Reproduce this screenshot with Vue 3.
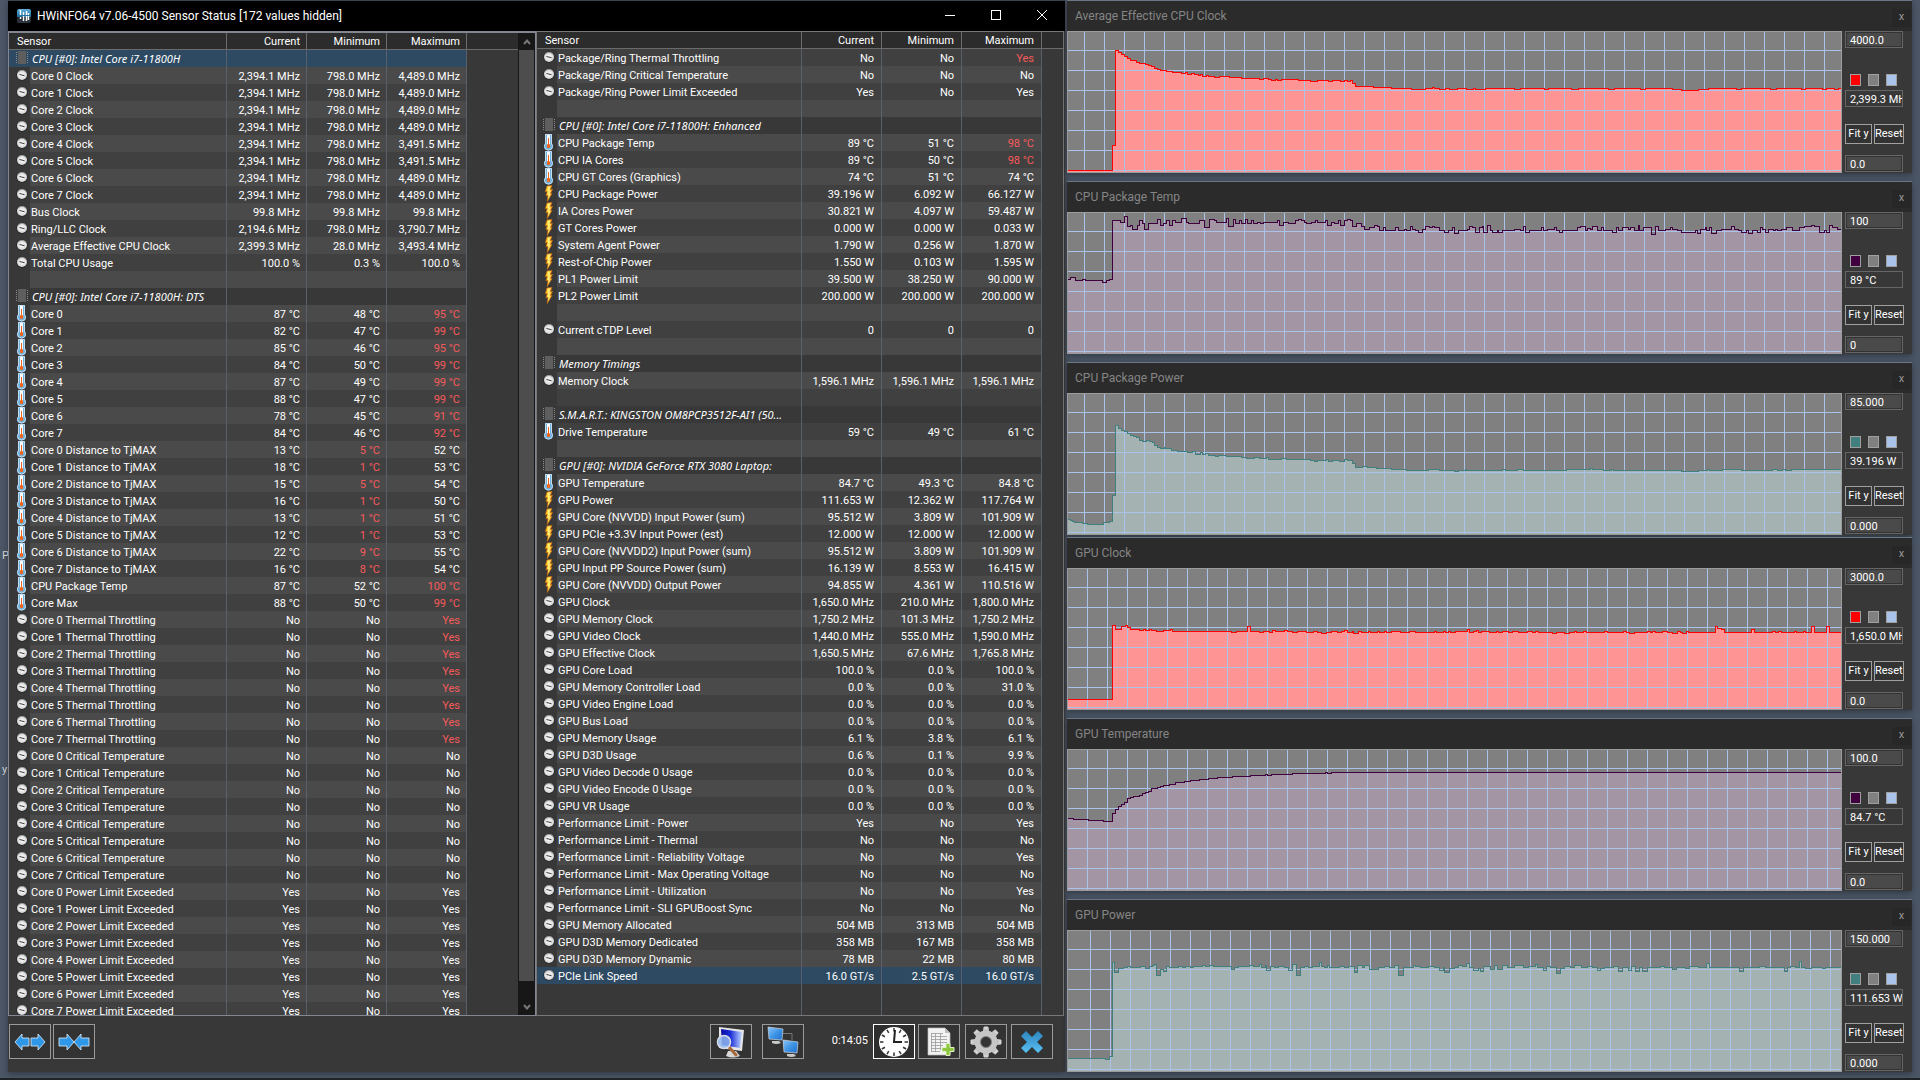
<script setup>
const CLOCK = 'clock'
const TEMP = 'temp'
const POWER = 'power'

const row = (icon, name, current, min, max, hot = '') => ({ kind: 'value', icon, name, cells: [current, min, max], hot })
const section = (name, selected = false) => ({ kind: 'section', icon: 'chip', name, cells: ['', '', ''], hot: '', selected })
const blank = () => ({ kind: 'blank', icon: '', name: '', cells: ['', '', ''], hot: '' })
const cores = [0, 1, 2, 3, 4, 5, 6, 7]

const coreMax = ['4,489.0', '4,489.0', '4,489.0', '4,489.0', '3,491.5', '3,491.5', '4,489.0', '4,489.0']
const coreTemps = [[87, 48, 95], [82, 47, 99], [85, 46, 95], [84, 50, 99], [87, 49, 99], [88, 47, 99], [78, 45, 91], [84, 46, 92]]
const coreDistance = [[13, 5, 52], [18, 1, 53], [15, 5, 54], [16, 1, 50], [13, 1, 51], [12, 1, 53], [22, 9, 55], [16, 8, 54]]

const leftRows = [
  section('CPU [#0]: Intel Core i7-11800H', true),
  ...cores.map(i => row(CLOCK, `Core ${i} Clock`, '2,394.1 MHz', '798.0 MHz', `${coreMax[i]} MHz`)),
  row(CLOCK, 'Bus Clock', '99.8 MHz', '99.8 MHz', '99.8 MHz'),
  row(CLOCK, 'Ring/LLC Clock', '2,194.6 MHz', '798.0 MHz', '3,790.7 MHz'),
  row(CLOCK, 'Average Effective CPU Clock', '2,399.3 MHz', '28.0 MHz', '3,493.4 MHz'),
  row(CLOCK, 'Total CPU Usage', '100.0 %', '0.3 %', '100.0 %'),
  blank(),
  section('CPU [#0]: Intel Core i7-11800H: DTS'),
  ...cores.map(i => row(TEMP, `Core ${i}`, ...coreTemps[i].map(v => `${v} °C`), 'max')),
  ...cores.map(i => row(TEMP, `Core ${i} Distance to TjMAX`, ...coreDistance[i].map(v => `${v} °C`), 'min')),
  row(TEMP, 'CPU Package Temp', '87 °C', '52 °C', '100 °C', 'max'),
  row(TEMP, 'Core Max', '88 °C', '50 °C', '99 °C', 'max'),
  ...cores.map(i => row(CLOCK, `Core ${i} Thermal Throttling`, 'No', 'No', 'Yes', 'max')),
  ...cores.map(i => row(CLOCK, `Core ${i} Critical Temperature`, 'No', 'No', 'No')),
  ...cores.map(i => row(CLOCK, `Core ${i} Power Limit Exceeded`, 'Yes', 'No', 'Yes'))
]

const rightRows = [
  row(CLOCK, 'Package/Ring Thermal Throttling', 'No', 'No', 'Yes', 'max'),
  row(CLOCK, 'Package/Ring Critical Temperature', 'No', 'No', 'No'),
  row(CLOCK, 'Package/Ring Power Limit Exceeded', 'Yes', 'No', 'Yes'),
  blank(),
  section('CPU [#0]: Intel Core i7-11800H: Enhanced'),
  row(TEMP, 'CPU Package Temp', '89 °C', '51 °C', '98 °C', 'max'),
  row(TEMP, 'CPU IA Cores', '89 °C', '50 °C', '98 °C', 'max'),
  row(TEMP, 'CPU GT Cores (Graphics)', '74 °C', '51 °C', '74 °C'),
  row(POWER, 'CPU Package Power', '39.196 W', '6.092 W', '66.127 W'),
  row(POWER, 'IA Cores Power', '30.821 W', '4.097 W', '59.487 W'),
  row(POWER, 'GT Cores Power', '0.000 W', '0.000 W', '0.033 W'),
  row(POWER, 'System Agent Power', '1.790 W', '0.256 W', '1.870 W'),
  row(POWER, 'Rest-of-Chip Power', '1.550 W', '0.103 W', '1.595 W'),
  row(POWER, 'PL1 Power Limit', '39.500 W', '38.250 W', '90.000 W'),
  row(POWER, 'PL2 Power Limit', '200.000 W', '200.000 W', '200.000 W'),
  blank(),
  row(CLOCK, 'Current cTDP Level', '0', '0', '0'),
  blank(),
  section('Memory Timings'),
  row(CLOCK, 'Memory Clock', '1,596.1 MHz', '1,596.1 MHz', '1,596.1 MHz'),
  blank(),
  section('S.M.A.R.T.: KINGSTON OM8PCP3512F-AI1 (50...'),
  row(TEMP, 'Drive Temperature', '59 °C', '49 °C', '61 °C'),
  blank(),
  section('GPU [#0]: NVIDIA GeForce RTX 3080 Laptop:'),
  row(TEMP, 'GPU Temperature', '84.7 °C', '49.3 °C', '84.8 °C'),
  row(POWER, 'GPU Power', '111.653 W', '12.362 W', '117.764 W'),
  row(POWER, 'GPU Core (NVVDD) Input Power (sum)', '95.512 W', '3.809 W', '101.909 W'),
  row(POWER, 'GPU PCIe +3.3V Input Power (est)', '12.000 W', '12.000 W', '12.000 W'),
  row(POWER, 'GPU Core (NVVDD2) Input Power (sum)', '95.512 W', '3.809 W', '101.909 W'),
  row(POWER, 'GPU Input PP Source Power (sum)', '16.139 W', '8.553 W', '16.415 W'),
  row(POWER, 'GPU Core (NVVDD) Output Power', '94.855 W', '4.361 W', '110.516 W'),
  row(CLOCK, 'GPU Clock', '1,650.0 MHz', '210.0 MHz', '1,800.0 MHz'),
  row(CLOCK, 'GPU Memory Clock', '1,750.2 MHz', '101.3 MHz', '1,750.2 MHz'),
  row(CLOCK, 'GPU Video Clock', '1,440.0 MHz', '555.0 MHz', '1,590.0 MHz'),
  row(CLOCK, 'GPU Effective Clock', '1,650.5 MHz', '67.6 MHz', '1,765.8 MHz'),
  row(CLOCK, 'GPU Core Load', '100.0 %', '0.0 %', '100.0 %'),
  row(CLOCK, 'GPU Memory Controller Load', '0.0 %', '0.0 %', '31.0 %'),
  row(CLOCK, 'GPU Video Engine Load', '0.0 %', '0.0 %', '0.0 %'),
  row(CLOCK, 'GPU Bus Load', '0.0 %', '0.0 %', '0.0 %'),
  row(CLOCK, 'GPU Memory Usage', '6.1 %', '3.8 %', '6.1 %'),
  row(CLOCK, 'GPU D3D Usage', '0.6 %', '0.1 %', '9.9 %'),
  row(CLOCK, 'GPU Video Decode 0 Usage', '0.0 %', '0.0 %', '0.0 %'),
  row(CLOCK, 'GPU Video Encode 0 Usage', '0.0 %', '0.0 %', '0.0 %'),
  row(CLOCK, 'GPU VR Usage', '0.0 %', '0.0 %', '0.0 %'),
  row(CLOCK, 'Performance Limit - Power', 'Yes', 'No', 'Yes'),
  row(CLOCK, 'Performance Limit - Thermal', 'No', 'No', 'No'),
  row(CLOCK, 'Performance Limit - Reliability Voltage', 'No', 'No', 'Yes'),
  row(CLOCK, 'Performance Limit - Max Operating Voltage', 'No', 'No', 'No'),
  row(CLOCK, 'Performance Limit - Utilization', 'No', 'No', 'Yes'),
  row(CLOCK, 'Performance Limit - SLI GPUBoost Sync', 'No', 'No', 'No'),
  row(CLOCK, 'GPU Memory Allocated', '504 MB', '313 MB', '504 MB'),
  row(CLOCK, 'GPU D3D Memory Dedicated', '358 MB', '167 MB', '358 MB'),
  row(CLOCK, 'GPU D3D Memory Dynamic', '78 MB', '22 MB', '80 MB'),
  { ...row(CLOCK, 'PCIe Link Speed', '16.0 GT/s', '2.5 GT/s', '16.0 GT/s'), selected: true }
]

const panes = [
  { id: 'left', rows: leftRows, scroll: true },
  { id: 'right', rows: rightRows, scroll: false }
]

const PLOT_W = 773
const PLOT_H = 140

// Each series is a list of "x:y" steps; the level holds until the next x.
const graphs = [
  {
    title: 'Average Effective CPU Clock', max: '4000.0', value: '2,399.3 MHz', min: '0.0', tone: 'red', grid: 16,
    steps: '0:138 44:113 47:18 50:20 53:22 56:24 59:26 62:28 68:30 71:31 77:32 80:33 83:34 86:36 89:37 92:38 98:39 104:40 113:41 117:40 119:42 123:41 126:42 130:43 132:42 134:44 138:43 140:44 146:45 151:44 161:45 173:46 191:47 195:46 200:47 203:48 207:47 209:48 213:47 230:48 242:49 249:48 260:49 264:48 272:49 276:48 279:49 282:48 284:51 287:54 305:55 323:56 343:57 357:56 364:55 366:56 371:57 377:56 381:57 389:56 398:57 405:56 407:57 417:56 446:57 452:56 476:57 480:56 503:57 510:56 540:57 546:56 572:57 577:56 604:57 613:58 630:57 640:56 668:57 673:56 702:57 708:56 733:57 737:56 754:57 758:56 766:57 770:56'
  },
  {
    title: 'CPU Package Temp', max: '100', value: '89 °C', min: '0', tone: 'plum', grid: 16,
    steps: '0:66 2:64 7:67 14:66 17:67 34:69 38:67 41:66 44:7 52:9 56:3 59:13 62:12 64:16 69:12 71:7 74:10 76:16 80:10 89:6 92:12 95:10 98:7 101:12 104:7 107:9 113:5 118:9 120:10 131:7 136:14 141:6 146:7 148:9 158:5 160:13 165:6 167:10 171:7 173:10 177:6 179:10 183:7 185:10 189:9 192:10 195:9 209:7 211:12 215:9 220:10 227:7 230:6 233:7 236:9 238:10 243:9 247:7 249:9 257:7 259:12 263:9 266:10 270:7 272:12 276:7 279:6 282:7 284:13 288:10 293:13 296:16 301:14 306:12 309:13 311:17 315:14 317:17 327:14 330:17 336:16 338:17 342:13 344:16 347:17 350:19 354:16 357:13 361:14 364:13 366:14 371:17 376:19 380:17 384:14 386:20 390:17 399:16 401:13 404:14 407:19 411:14 414:13 415:19 419:12 422:17 424:19 429:17 430:19 434:17 446:16 452:17 455:13 457:19 461:17 473:14 475:17 479:16 486:14 488:17 491:19 494:17 509:14 512:13 517:17 519:15 522:16 524:13 529:17 533:14 535:17 544:19 548:14 550:17 554:14 560:16 562:14 566:17 570:12 571:17 575:14 583:21 587:13 590:17 597:16 602:14 604:16 609:17 613:19 627:17 629:20 632:16 637:14 638:17 641:14 643:20 648:17 653:16 663:13 666:16 670:17 673:19 678:17 680:20 684:17 689:19 692:14 694:16 697:19 700:16 705:17 707:16 709:17 713:16 718:14 724:17 731:14 736:13 743:12 746:13 751:19 756:17 758:19 761:12 764:14 769:16'
  },
  {
    title: 'CPU Package Power', max: '85.000', value: '39.196 W', min: '0.000', tone: 'teal', grid: 16,
    steps: '0:125 2:126 4:127 6:128 14:129 19:130 35:128 41:127 44:101 47:31 50:34 53:36 56:37 59:39 62:41 65:42 68:43 71:46 74:47 78:46 81:47 84:48 86:51 89:53 92:54 96:53 97:54 103:56 109:57 119:58 124:57 127:60 132:58 134:60 137:59 140:61 147:62 150:61 158:62 173:63 178:64 186:63 191:64 198:63 200:65 213:64 218:65 242:66 246:67 249:66 258:65 260:67 264:66 271:67 276:65 279:66 284:69 287:73 294:72 299:73 308:74 323:75 338:76 360:75 371:76 386:77 390:76 397:75 398:76 434:75 437:76 449:75 455:76 498:75 522:74 524:75 535:76 543:75 545:76 613:77 630:76 639:75 641:76 654:75 673:76 704:75 709:76 714:75 717:76 723:75'
  },
  {
    title: 'GPU Clock', max: '3000.0', value: '1,650.0 MHz', min: '0.0', tone: 'red', grid: 19, tight: true,
    steps: '0:130 44:56 47:60 53:57 57:56 59:58 62:60 71:61 75:60 77:61 81:60 83:61 88:62 95:61 102:60 104:62 163:63 168:62 179:57 182:62 191:63 195:62 201:63 204:61 207:62 216:61 219:62 224:63 229:62 238:63 245:62 249:63 253:64 258:63 263:62 269:63 273:62 276:61 279:63 284:62 285:64 290:62 293:63 300:62 302:63 309:62 311:63 316:62 318:63 323:62 332:63 341:62 347:63 366:62 368:63 375:62 377:63 380:62 382:63 387:62 399:60 401:63 405:62 408:61 410:63 413:62 421:63 428:62 430:63 434:62 440:63 444:62 450:63 459:62 464:63 467:62 470:63 484:64 488:63 496:64 501:63 506:62 508:63 515:62 518:63 536:62 539:63 555:62 558:63 561:64 566:63 579:62 582:63 584:62 587:63 594:62 599:63 604:64 609:62 612:63 614:64 618:62 620:63 647:57 649:59 653:60 656:63 683:60 686:63 704:62 707:63 710:62 713:63 726:62 728:63 735:62 737:63 743:57 746:63 758:57 761:63'
  },
  {
    title: 'GPU Temperature', max: '100.0', value: '84.7 °C', min: '0.0', tone: 'plum', grid: 19,
    steps: '0:68 5:69 20:70 35:71 44:63 47:59 50:56 53:54 56:52 59:48 62:47 65:46 71:45 74:43 77:42 80:41 83:38 89:37 92:36 95:35 101:34 107:32 116:31 122:30 131:29 140:28 149:27 164:26 182:25 197:24 199:25 203:24 224:23 257:22 259:23 263:22'
  },
  {
    title: 'GPU Power', max: '150.000', value: '111.653 W', min: '0.000', tone: 'teal', grid: 22,
    steps: '0:127 37:128 41:125 44:31 46:41 50:37 55:36 59:35 62:36 72:35 77:37 81:35 84:34 86:33 88:44 92:38 95:40 98:35 101:36 110:35 114:36 117:35 122:36 125:35 134:34 137:35 141:34 145:35 163:38 166:36 170:35 181:34 185:35 191:33 193:36 197:34 198:39 202:35 206:36 210:35 216:36 220:39 224:33 228:44 232:36 236:35 240:36 244:35 251:31 253:35 256:36 259:34 261:36 271:35 276:36 280:35 286:41 289:34 294:36 296:34 301:38 307:38 310:36 316:35 321:36 326:34 330:44 335:36 345:34 347:35 352:36 360:35 366:36 371:39 375:36 376:41 381:37 386:36 390:34 394:35 398:32 401:36 405:39 410:37 412:40 415:35 422:38 426:34 429:38 434:34 439:36 446:34 455:36 460:35 467:33 469:36 475:39 478:35 482:36 488:42 492:37 496:35 502:36 506:34 513:36 519:35 524:36 529:39 532:37 536:36 545:35 550:40 554:36 560:39 563:35 567:40 571:36 574:40 579:36 592:35 596:36 604:38 608:36 617:37 621:35 630:36 638:32 641:36 671:40 675:36 691:35 697:36 716:40 719:36 722:35 727:36 731:30 733:36 737:37 743:36 754:37 757:36'
  }
].map(g => {
  const pts = g.steps.split(' ').map(p => p.split(':').map(Number))
  const line = pts.map(([x, y], i) => (i ? `H${x + 0.5}V${y + 0.5}` : `M0 ${y + 0.5}`)).join('') + `H${PLOT_W}`
  const columns = []
  for (let x = g.grid; x < PLOT_W; x += 20) columns.push(x)
  return { ...g, line, area: `${line}V${PLOT_H}H0Z`, columns }
})

const gridRows = [18, 38, 58, 78, 98, 118, 138]
const ticks = Array.from({ length: 12 }, (_, i) => i * 30)
const teeth = Array.from({ length: 8 }, (_, i) => i * 45)
</script>

<template>
  <div class="desktop">
    <svg class="defs" width="0" height="0" aria-hidden="true">
      <defs>
        <radialGradient id="dial"><stop offset="0" stop-color="#fff" /><stop offset="1" stop-color="#d4d4d4" /></radialGradient>
        <linearGradient id="bolt" x2="1"><stop offset="0" stop-color="#ffb400" /><stop offset=".5" stop-color="#fff27a" /><stop offset="1" stop-color="#ff9a1a" /></linearGradient>
        <linearGradient id="screen" x2="1" y2="1"><stop offset="0" stop-color="#8fc6f7" /><stop offset=".5" stop-color="#3f95e6" /><stop offset="1" stop-color="#1d6fd0" /></linearGradient>
        <linearGradient id="navy" x2="1" y2="0"><stop offset="0" stop-color="#0a0a9c" /><stop offset=".45" stop-color="#1a2ed8" /><stop offset="1" stop-color="#c2d8ff" /></linearGradient>
        <linearGradient id="metal" x2="0" y2="1"><stop offset="0" stop-color="#e4e4e4" /><stop offset="1" stop-color="#aaa" /></linearGradient>
        <linearGradient id="cross" x2="0" y2="1"><stop offset="0" stop-color="#2a86bf" /><stop offset="1" stop-color="#5cc0f2" /></linearGradient>
        <linearGradient id="badge" x2="0" y2="1"><stop offset="0" stop-color="#5fb0dc" /><stop offset=".55" stop-color="#1c6a99" /><stop offset=".56" stop-color="#1a2228" /><stop offset="1" stop-color="#303a40" /></linearGradient>
      </defs>
      <symbol id="icon-clock" viewBox="0 0 12 17">
        <circle cx="6" cy="8" r="5.600" fill="#202020" />
        <circle cx="6" cy="8" r="5" fill="url(#dial)" />
        <path d="M2 5.600A4.600 4.600 0 0 1 10 5.600" fill="none" stroke="#8a8a8a" stroke-width=".9" />
        <path d="M3.500 7.500L8.500 8.700" stroke="#3a3a3a" stroke-width="1" fill="none" />
      </symbol>
      <symbol id="icon-temp" viewBox="0 0 12 17">
        <path d="M2 0h7v9.500a4 4 0 0 1 1 3a4.500 4 0 0 1-9 0a4 4 0 0 1 1-3Z" fill="#6fb0dc" />
        <path d="M2.500 .5h6v9.500q1 1 1 2.500a4 3.500 0 0 1-8 0q0-1.500 1-2.500Z" fill="none" stroke="#c4ddee" />
        <rect x="4" y="1" width="3" height="11" fill="#fff" />
        <rect x="5" y="4" width="1" height="8" fill="#f0641e" />
        <rect x="4" y="10" width="3" height="4" rx="1" fill="#f2651a" />
      </symbol>
      <symbol id="icon-power" viewBox="0 0 12 17">
        <path d="M4 1L9 .5L7.300 4.500L9.500 4.300L7.500 8.500L9 8.600L4.200 16.500L5 10.500L3 10.700L4.300 6.600L2.300 6.800Z" fill="url(#bolt)" stroke="#c8680a" stroke-width=".7" />
      </symbol>
      <symbol id="icon-chip" viewBox="0 0 12 17">
        <rect x="2" y="1" width="8" height="13" fill="#5e5e5e" />
        <path d="M.5 2v12M11.500 2v12" stroke="#8c8c8c" stroke-width="1" stroke-dasharray="1 1" />
      </symbol>
    </svg>

    <div class="behind" aria-hidden="true"><span class="stray first">P</span><span class="stray second">y</span></div>

    <main class="window sensors">
      <header class="titlebar">
        <svg class="app-icon" viewBox="0 0 14 14" aria-hidden="true">
          <rect width="14" height="14" rx="2" fill="url(#badge)" />
          <path d="M3.500 1v5M6.500 3v3M9.500 2v4M11.500 4v2M3.500 8v2M6.500 7v5M9.500 7v5M11.500 7v4" stroke="#fff" stroke-width="1.500" />
        </svg>
        <h1>HWiNFO64 v7.06-4500 Sensor Status [172 values hidden]</h1>
        <div class="win-buttons">
          <button type="button" aria-label="Minimize"><svg viewBox="0 0 10 10"><path d="M0 5.500h10" /></svg></button>
          <button type="button" aria-label="Maximize"><svg viewBox="0 0 10 10"><rect x=".5" y=".5" width="9" height="9" /></svg></button>
          <button type="button" aria-label="Close"><svg viewBox="0 0 10 10"><path d="M0 0L10 10M10 0L0 10" /></svg></button>
        </div>
      </header>

      <div class="panes">
        <section v-for="pane in panes" :key="pane.id" class="pane" :class="pane.id">
          <table>
            <colgroup>
              <col class="c-icon"><col><col class="c-num"><col class="c-num"><col class="c-num"><col class="c-rest">
            </colgroup>
            <thead>
              <tr>
                <th colspan="2" scope="col" class="name">Sensor</th>
                <th scope="col">Current</th>
                <th scope="col">Minimum</th>
                <th scope="col">Maximum</th>
                <td class="rest"></td>
              </tr>
            </thead>
            <tbody>
              <tr v-for="(r, i) in pane.rows" :key="i" :class="[r.kind, { selected: r.selected }]">
                <td class="icon"><svg v-if="r.icon" viewBox="0 0 12 17" aria-hidden="true"><use :href="`#icon-${r.icon}`" /></svg></td>
                <td class="name">{{ r.name }}</td>
                <td>{{ r.cells[0] }}</td>
                <td :class="{ hot: r.hot === 'min' }">{{ r.cells[1] }}</td>
                <td :class="{ hot: r.hot === 'max' }">{{ r.cells[2] }}</td>
                <td class="rest"></td>
              </tr>
              <tr v-if="!pane.scroll" class="filler"><td class="icon"></td><td></td><td></td><td></td><td></td><td class="rest"></td></tr>
            </tbody>
          </table>
          <div v-if="pane.scroll" class="scrollbar">
            <button type="button" aria-label="Scroll up"><svg viewBox="0 0 8 6"><path d="M1 5L4 1.500L7 5" /></svg></button>
            <div class="track"><div class="thumb"></div></div>
            <button type="button" aria-label="Scroll down"><svg viewBox="0 0 8 6"><path d="M1 1L4 4.500L7 1" /></svg></button>
          </div>
        </section>
      </div>

      <footer class="toolbar">
        <div class="group">
          <button type="button" aria-label="Expand columns">
            <svg viewBox="0 0 32 18" width="32" height="18"><path d="M1 9L8 1v4h7v8H8v4ZM31 9L24 1v4h-7v8h7v4Z" fill="#2f97e8" stroke="#e2f0fa" stroke-width=".8" /></svg>
          </button>
          <button type="button" aria-label="Shrink columns">
            <svg viewBox="0 0 32 18" width="32" height="18"><path d="M16 9L9 1v4H1v8h8v4ZM16 9L23 1v4h8v8h-8v4Z" fill="#2f97e8" stroke="#e2f0fa" stroke-width=".8" /></svg>
          </button>
        </div>
        <div class="group actions">
          <button type="button" class="summary" aria-label="System summary">
            <svg viewBox="0 0 32 32" width="32" height="32">
              <path d="M13 25h8l4 5q-7 3-14 0Z" fill="#d8d8d8" />
              <path d="M4 1L29 4L27 25L4 22Z" fill="#e6e6e6" />
              <path d="M6 3L27 6L25 22L7 19Z" fill="url(#navy)" />
              <path d="M14 21L21 29" stroke="#a86a3a" stroke-width="3" stroke-linecap="round" />
              <circle cx="9" cy="16" r="6.500" fill="#8fb6ee" fill-opacity=".85" stroke="#d6dde6" stroke-width="1.600" />
            </svg>
          </button>
          <button type="button" class="remote" aria-label="Remote monitoring">
            <svg viewBox="0 0 32 32" width="32" height="32">
              <path d="M16 7.500h9V14" fill="none" stroke="#777" />
              <path d="M5 15h7l2 2q-5 2-9 0Z" fill="#c8c8c8" />
              <path d="M1 1L16 3L15 14L2 13Z" fill="url(#screen)" stroke="#cfd6dc" stroke-width=".7" />
              <path d="M20 28h7l2 2q-5 2-9 0Z" fill="#c8c8c8" />
              <path d="M16 14L31 16L30 27L17 26Z" fill="url(#screen)" stroke="#cfd6dc" stroke-width=".7" />
            </svg>
          </button>
          <time class="elapsed">0:14:05</time>
          <button type="button" class="reset lit" aria-label="Reset timer">
            <svg viewBox="0 0 32 32" width="32" height="32">
              <circle cx="16" cy="16" r="15" fill="#fff" />
              <path v-for="t in ticks" :key="t" d="M16 2v3.500" stroke="#333" stroke-width="1.500" :transform="`rotate(${t} 16 16)`" />
              <path d="M17 4L16 16H24" fill="none" stroke="#222" stroke-width="2" />
            </svg>
          </button>
          <button type="button" class="log" aria-label="Start logging">
            <svg viewBox="0 0 32 32" width="32" height="32">
              <path d="M5 2H22L27 7V29H5Z" fill="#f2f2f2" stroke="#bbb" stroke-width=".7" />
              <path d="M22 2L27 7H22Z" fill="#bdbdbd" />
              <path d="M8 7.500H20M8 10.500H24M8 13.500H24M8 16.500H24M8 19.500H20M8 22.500H18M8 25.500H17M8.500 7V26M12.500 7V26M17.500 7V24" stroke="#999" stroke-width=".8" fill="none" />
              <path d="M23 17.500h4v4h4v4h-4v4h-4v-4h-4v-4h4Z" fill="#8dc63f" stroke="#dff0c4" />
            </svg>
          </button>
          <button type="button" class="settings" aria-label="Settings">
            <svg viewBox="0 0 32 32" width="32" height="32">
              <path v-for="t in teeth" :key="t" d="M13.500 6L14 1h4l.5 5Z" fill="url(#metal)" stroke="#ccc" :transform="`rotate(${t} 16 16)`" />
              <circle cx="16" cy="16" r="8.500" fill="none" stroke="#c6c6c6" stroke-width="6" />
              <circle cx="16" cy="16" r="5.500" fill="#333" stroke="#888" />
            </svg>
          </button>
          <button type="button" class="close" aria-label="Close sensors">
            <svg viewBox="0 0 32 32" width="32" height="32"><path d="M10 5L16 11L22 5L27 10L21 16L27 22L22 27L16 21L10 27L5 22L11 16L5 10Z" fill="url(#cross)" /></svg>
          </button>
        </div>
      </footer>
    </main>

    <aside class="graphs">
      <section v-for="g in graphs" :key="g.title" class="window graph" :class="[g.tone, { tight: g.tight }]">
        <header class="graph-title">
          <h2>{{ g.title }}</h2>
          <button type="button" :aria-label="`Close ${g.title}`">x</button>
        </header>
        <div class="graph-body">
          <svg class="plot" :viewBox="`0 0 ${PLOT_W} ${PLOT_H}`" preserveAspectRatio="none" role="img" :aria-label="g.title" shape-rendering="crispEdges">
            <path class="area" :d="g.area" />
            <rect v-for="x in g.columns" :key="`x${x}`" class="grid" :x="x" y="0" width="1" :height="PLOT_H" />
            <rect v-for="y in gridRows" :key="`y${y}`" class="grid" x="0" :y="y" :width="PLOT_W" height="1" />
            <path class="line" :d="g.line" />
          </svg>
          <div class="side">
            <input type="text" class="limit" :value="g.max" :aria-label="`${g.title} upper limit`">
            <div class="swatches">
              <button type="button" class="swatch series" aria-label="Line colour"></button>
              <button type="button" class="swatch back" aria-label="Background colour"></button>
              <button type="button" class="swatch mesh" aria-label="Grid colour"></button>
            </div>
            <input type="text" class="value" :value="g.value" readonly :aria-label="`${g.title} current value`">
            <div class="fit">
              <button type="button">Fit y</button>
              <button type="button">Reset</button>
            </div>
            <input type="text" class="limit" :value="g.min" :aria-label="`${g.title} lower limit`">
          </div>
        </div>
      </section>
    </aside>
    <div class="taskbar" aria-hidden="true"></div>
  </div>
</template>

<style>
html, body { margin: 0; background: #4b5666; }
</style>

<style scoped>
* { box-sizing: border-box; }
.desktop {
  position: relative;
  height: 100vh;
  display: grid;
  grid-template-columns: minmax(0, 1057fr) minmax(0, 845fr);
  grid-template-rows: minmax(0, 1fr) 2px;
  column-gap: 2px;
  padding: 0 8px;
  background: #4b5666;
  color: #fff;
  font: 11px/17px Roboto, "Noto Sans", sans-serif;
  overflow: hidden;
}
button, input { font: inherit; color: inherit; margin: 0; }
h1, h2 { margin: 0; font-weight: 400; font-size: 12px; line-height: 16px; white-space: nowrap; }
.defs { position: absolute; }
.behind { position: absolute; inset: 0 auto 0 0; width: 8px; overflow: hidden; }
.stray { position: absolute; left: 2px; color: #c8ccd2; }
.first { top: 547px; }
.second { top: 761px; }

.window { box-shadow: 0 2px 6px rgba(0, 0, 0, .35); border-top: 1px solid #6b7787; }
.sensors { display: flex; flex-direction: column; min-width: 0; margin-bottom: 6px; background: #383838; border-top-color: #3c4450; }

.titlebar { display: flex; align-items: center; flex: none; height: 30px; padding-left: 9px; background: #000; }
.app-icon { width: 14px; height: 14px; margin-right: 6px; }
.win-buttons { display: flex; margin-left: auto; }
.win-buttons button { width: 46px; height: 30px; padding: 0 0 2px; border: 0; background: none; display: grid; place-items: center; }
.win-buttons svg { width: 10px; height: 10px; fill: none; stroke: #fff; stroke-width: 1; }

.panes { display: flex; flex: 1; min-height: 0; }
.pane { display: flex; flex: 1; min-width: 0; overflow: hidden; border: 1px solid #828790; background: #383838; }
.left { border-top-width: 2px; }
.right { border-color: #777; margin-right: 1px; }
table { flex: 1; width: 100%; min-width: 0; table-layout: fixed; border-collapse: separate; border-spacing: 0; }
.right table { height: 100%; }
.c-icon { width: 21px; }
.c-num { width: 80px; }
.c-rest { width: 51px; }
.right .c-icon { width: 20px; }
.right .c-rest { width: 21px; }
th, td { height: 17px; padding: 2px 6px 0 0; line-height: 15px; font-weight: 400; text-align: right; white-space: nowrap; overflow: hidden; border-right: 1px solid #59606b; }
.right th, .right td { padding-right: 7px; }
.pane th, thead td { padding-top: 0; background: #2c2c2c; border-right-color: #6b6b6b; border-bottom: 1px solid #6b6b6b; }
.pane .name { text-align: left; padding-left: 1px; padding-right: 0; }
.pane th.name { padding-left: 8px; }
.pane td.icon { padding: 0 0 0 7px; border-right: 0; }
.pane td.rest { border-right: 0; }
.right td.icon { padding-left: 6px; }
td svg { display: block; width: 12px; height: 17px; }
tbody tr:nth-child(odd) td { background: #404040; }
tbody tr:nth-child(even) td { background: #4a4a4a; }
tbody tr td.icon, tbody tr td.rest, tbody tr.section td, tbody tr.filler td { background: #383838; }
tbody tr.section td { padding-top: 0; line-height: 17px; font-family: "Noto Sans", sans-serif; font-style: italic; }
tbody tr.selected td:not(.rest) { background: #2d4a62; }
.pane .section .name { padding-left: 2px; }
tr.filler td { height: auto; }
.hot { color: #f75a5a; }

.scrollbar { display: flex; flex-direction: column; flex: none; width: 17px; background: #171717; }
.scrollbar button { height: 17px; padding: 0; border: 0; background: #171717; display: grid; place-items: center; }
.scrollbar svg { width: 8px; height: 6px; fill: none; stroke: #777; stroke-width: 2; }
.track { flex: 1; padding: 0 1px; }
.thumb { height: calc(100% - 17px); background: #4d4d4d; }

.toolbar { display: flex; justify-content: space-between; align-items: flex-start; flex: none; height: 56px; padding: 8px 12px 0 1px; }
.group { display: flex; align-items: flex-start; gap: 2px; }
.toolbar button { display: grid; place-items: center; width: 42px; height: 35px; padding: 0; border: 1px solid #9a9a9a; background: #333; }
.toolbar button.lit { border-color: #fff; background: #2e2e2e; }
.actions { gap: 0; }
.remote { margin-left: 10px; }
.elapsed { width: 69px; padding-right: 5px; text-align: right; line-height: 34px; }
.log { margin-left: 3px; }
.settings { margin-left: 5px; }
.close { margin-left: 4px; }

.graphs { display: flex; flex-direction: column; gap: 8px; min-width: 0; }
.graph { flex: none; height: 173px; background: #383838; }
.graph.tight { margin-top: -6px; }
.graph-title { display: flex; align-items: center; justify-content: space-between; height: 30px; padding: 0 1px 0 8px; background: #2b2b2b; color: #858585; }
.graph-title button { width: 19px; height: 18px; margin-top: 4px; padding: 0 0 2px; border: 0; background: #272727; color: #9a9a9a; line-height: 14px; }
.graph-body { display: flex; height: 142px; }
.plot { flex: 1; min-width: 0; height: 142px; background: #808080; border: 1px solid #9c9c9c; }
.grid { fill: #aac3ea; }
.line { fill: none; stroke-width: 1; }
.red .line { stroke: #f00; }
.red .area { fill: #ff9494; }
.plum .line { stroke: #40003f; }
.plum .area { fill: #a495a4; }
.teal .line { stroke: #428080; }
.teal .area { fill: #a4b2b2; }
.side { flex: none; width: 70px; padding: 0 9px 0 3px; }
input { display: block; width: 58px; height: 17px; padding: 1px 0 0 4px; border: 1px solid #666; border-radius: 0; outline: 0; line-height: 14px; background: #383838; }
.limit { background: #4a4a4a; box-shadow: inset 0 0 0 1px #333; }
.swatches { display: flex; gap: 7px; margin: 26px 0 4px 5px; }
.swatch { width: 11px; height: 12px; padding: 0; border: 1px solid #a0a0a0; }
.red .series { background: #f00; }
.plum .series { background: #40003f; }
.teal .series { background: #428080; }
.back { background: #808080; }
.mesh { background: #aac3ea; }
.fit { display: flex; gap: 2px; margin: 17px 0 11px; }
.fit button { flex: 0 0 27px; height: 20px; padding: 0; border: 1px solid #a0a0a0; background: #333; line-height: 18px; text-align: center; white-space: nowrap; }
.fit button:last-child { flex-basis: 28px; }
.taskbar { grid-column: 1 / -1; margin: 0 -8px; background: #1f2226; }
</style>
